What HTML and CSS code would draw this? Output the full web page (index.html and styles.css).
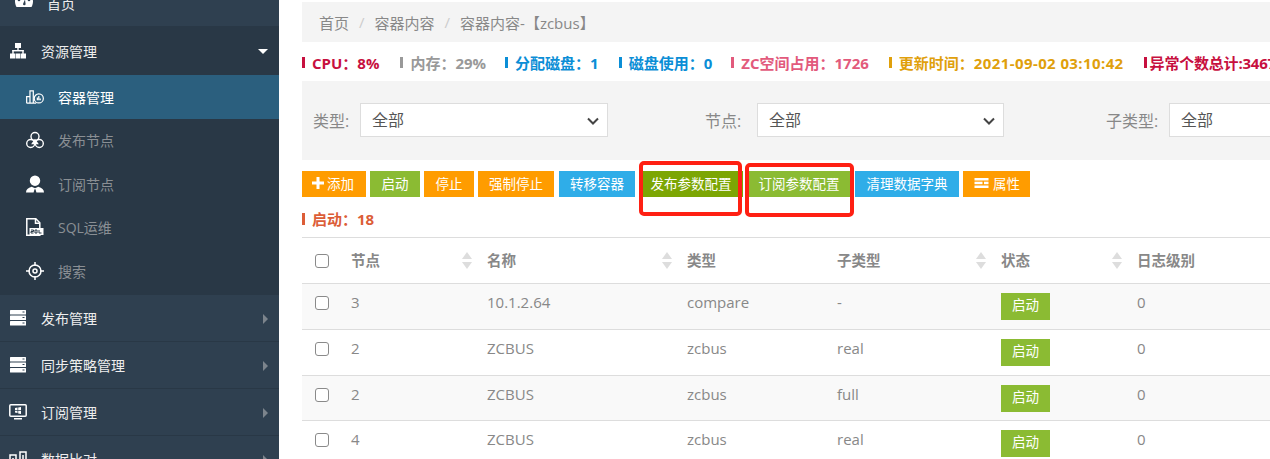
FILE: index.html
```html
<!DOCTYPE html>
<html lang="zh-CN">
<head>
    <meta charset="UTF-8">
    <title>容器内容</title>
    <link rel="stylesheet" href="styles.css">
</head>
<body>
    <aside class="sidebar">
        <ul class="nav">
            <li class="nav-item">
                <svg class="nav-icon gauge" viewBox="0 0 18 14"><path d="M9 0C4 0 0 3.500 0 8.500c0 2 .6 3.800 1.500 5.500h15c.9-1.700 1.500-3.500 1.500-5.500C18 3.500 14 0 9 0z" fill="#fff"/><circle cx="4" cy="7" r="1.300" fill="#2f4050"/><circle cx="14" cy="7" r="1.300" fill="#2f4050"/><circle cx="9" cy="4" r="1.300" fill="#2f4050"/><path d="M8 11l2-4.500.6 4.500a1.300 1.300 0 1 1-2.600 0z" fill="#2f4050"/></svg>
                <span>首页</span>
            </li>
            <li class="nav-item open">
                <svg class="nav-icon" viewBox="0 0 16 16" fill="#fff"><rect x="5" y="0" width="6" height="5"/><rect x="7.300" y="5" width="1.400" height="3"/><rect x="2.300" y="7" width="11.400" height="1.400"/><rect x="2.300" y="7" width="1.400" height="4"/><rect x="12.300" y="7" width="1.400" height="4"/><rect x="0" y="10.500" width="5" height="5"/><rect x="5.500" y="10.500" width="5" height="5"/><rect x="11" y="10.500" width="5" height="5"/></svg>
                <span>资源管理</span>
                <i class="caret-down"></i>
            </li>
            <li class="sub-item active">
                <svg class="sub-icon" viewBox="0 0 19 15" fill="none" stroke="#fff" stroke-width="1.300"><path d="M.7 14V7h3.500v7M4.200 14V1h3.500v13M.7 14h10"/><circle cx="13.500" cy="9" r="4.800" fill="#2b5f7e"/><path d="M12 11V8M13.500 11V6.500M15 11V9"/></svg>
                <span>容器管理</span>
            </li>
            <li class="sub-item">
                <svg class="sub-icon" viewBox="0 0 18 17" fill="none" stroke="#fff" stroke-width="1.400"><circle cx="9" cy="5" r="4"/><circle cx="4.700" cy="12" r="4"/><circle cx="13.300" cy="12" r="4"/><path d="M6.500 12l2.500-3.500 2.500 3.500z" fill="#fff"/></svg>
                <span>发布节点</span>
            </li>
            <li class="sub-item">
                <svg class="sub-icon" viewBox="0 0 19 18" fill="#fff"><circle cx="9.500" cy="5.500" r="5.500"/><path d="M0 18c0-3 2-5 6-6l3.500 1.500 3.500-1.500c4 1 6 3 6 6h-8l-1-3.500h-1l-1 3.500z"/></svg>
                <span>订阅节点</span>
            </li>
            <li class="sub-item">
                <svg class="sub-icon" viewBox="0 0 18 18"><path d="M.8.8h9l4 4v12.400h-13z" fill="none" stroke="#fff" stroke-width="1.500"/><path d="M9.500.8v4.500h4.300" fill="none" stroke="#fff" stroke-width="1.500"/><rect x="3.500" y="10" width="14" height="7" fill="#fff"/><path d="M5 12h2.500v1.500H5V15h2.500M9 12h2v3H9zM13 12v3h2.500" fill="none" stroke="#293846"/></svg>
                <span>SQL运维</span>
            </li>
            <li class="sub-item last">
                <svg class="sub-icon" viewBox="0 0 18 18" fill="none" stroke="#fff" stroke-width="1.500"><circle cx="9" cy="9" r="6"/><circle cx="9" cy="9" r="2"/><path d="M9 0v4M9 14v4M0 9h4M14 9h4"/></svg>
                <span>搜索</span>
            </li>
            <li class="nav-item">
                <svg class="nav-icon" viewBox="0 0 16 16" fill="#fff"><rect width="16" height="4.500" rx=".5"/><rect y="5.500" width="16" height="4.500" rx=".5"/><rect y="11" width="16" height="4.500" rx=".5"/><path d="M12.500 2h2M12.500 7.500h2M12.500 13h2" stroke="#2f4050"/></svg>
                <span>发布管理</span>
                <i class="caret-right"></i>
            </li>
            <li class="nav-item">
                <svg class="nav-icon" viewBox="0 0 16 16" fill="#fff"><rect width="16" height="4.500" rx=".5"/><rect y="5.500" width="16" height="4.500" rx=".5"/><rect y="11" width="16" height="4.500" rx=".5"/><path d="M12.500 2h2M12.500 7.500h2M12.500 13h2" stroke="#2f4050"/></svg>
                <span>同步策略管理</span>
                <i class="caret-right"></i>
            </li>
            <li class="nav-item">
                <svg class="nav-icon wide" viewBox="0 0 18 16"><rect x=".8" y=".8" width="16.400" height="11.400" rx="1" fill="none" stroke="#fff" stroke-width="1.500"/><path d="M6 4l2.500-.4V6H6zM9.200 3.500L12 3v3H9.200zM6 6.700h2.500V9L6 8.600zM9.200 6.700H12V10l-2.800-.5z" fill="#fff"/><rect x="5" y="14" width="8" height="1.500" fill="#fff"/></svg>
                <span>订阅管理</span>
                <i class="caret-right"></i>
            </li>
            <li class="nav-item">
                <svg class="nav-icon wide" viewBox="0 0 18 16" fill="none" stroke="#fff" stroke-width="1.500"><path d="M1 15V4h6v11M1 15h16M11 15V1h6v14M4 7v5M14 4v8"/></svg>
                <span>数据比对</span>
                <i class="caret-right"></i>
            </li>
        </ul>
    </aside>

    <main class="content">
        <div class="breadcrumb">
            <span>首页</span><span class="sep">/</span><span>容器内容</span><span class="sep">/</span><span>容器内容-【zcbus】</span>
        </div>

        <div class="stats">
            <span class="stat crimson"><span>CPU：8%</span></span>
            <span class="stat gray"><span>内存：29%</span></span>
            <span class="stat blue"><span>分配磁盘：1</span></span>
            <span class="stat blue"><span>磁盘使用：0</span></span>
            <span class="stat pink"><span>ZC空间占用：1726</span></span>
            <span class="stat amber"><span>更新时间：<span class="date">2021-09-02 03:10:42</span></span></span>
            <span class="stat crimson tight"><span>异常个数总计:3467</span></span>
        </div>

        <div class="filters">
            <label class="field">
                <span class="field-label">类型:</span>
                <span class="select-wrap">
                    <select><option>全部</option></select>
                    <svg class="chevron" viewBox="0 0 12 8"><path d="M1 1.500l5 5 5-5" fill="none" stroke="#444" stroke-width="2"/></svg>
                </span>
            </label>
            <label class="field wide-gap">
                <span class="field-label">节点:</span>
                <span class="select-wrap">
                    <select><option>全部</option></select>
                    <svg class="chevron" viewBox="0 0 12 8"><path d="M1 1.500l5 5 5-5" fill="none" stroke="#444" stroke-width="2"/></svg>
                </span>
            </label>
            <label class="field long">
                <span class="field-label">子类型:</span>
                <span class="select-wrap">
                    <select><option>全部</option></select>
                    <svg class="chevron" viewBox="0 0 12 8"><path d="M1 1.500l5 5 5-5" fill="none" stroke="#444" stroke-width="2"/></svg>
                </span>
            </label>
        </div>

        <div class="toolbar">
            <button class="btn orange icon-btn">
                <svg class="btn-icon" viewBox="0 0 12 12" fill="#fff"><path d="M4.500 0h3v4.500H12v3H7.500V12h-3V7.500H0v-3h4.500z"/></svg>添加
            </button>
            <button class="btn green short">启动</button>
            <button class="btn orange short">停止</button>
            <button class="btn orange">强制停止</button>
            <button class="btn sky move">转移容器</button>
            <button class="btn olive short">发布参数配置</button>
            <button class="btn green short">订阅参数配置</button>
            <button class="btn sky short">清理数据字典</button>
            <button class="btn orange attr">
                <svg class="btn-icon list" viewBox="0 0 14 10" fill="#fff"><rect width="14" height="2.500"/><rect y="3.700" width="8" height="2.500"/><rect x="9.500" y="3.700" width="4.500" height="2.500"/><rect y="7.500" width="14" height="2.500"/></svg>属性
            </button>
        </div>

        <div class="run-count"><span>启动：18</span></div>

        <table class="grid">
            <colgroup>
                <col class="c-check"><col class="c-node"><col class="c-name"><col class="c-type"><col class="c-sub"><col class="c-state"><col>
            </colgroup>
            <thead>
                <tr>
                    <th><input type="checkbox"></th>
                    <th class="sortable">节点</th>
                    <th class="sortable">名称</th>
                    <th>类型</th>
                    <th class="sortable">子类型</th>
                    <th class="sortable">状态</th>
                    <th>日志级别</th>
                </tr>
            </thead>
            <tbody>
                <tr>
                    <td><input type="checkbox"></td>
                    <td>3</td><td>10.1.2.64</td><td>compare</td><td>-</td>
                    <td><span class="badge">启动</span></td><td>0</td>
                </tr>
                <tr>
                    <td><input type="checkbox"></td>
                    <td>2</td><td>ZCBUS</td><td>zcbus</td><td>real</td>
                    <td><span class="badge">启动</span></td><td>0</td>
                </tr>
                <tr>
                    <td><input type="checkbox"></td>
                    <td>2</td><td>ZCBUS</td><td>zcbus</td><td>full</td>
                    <td><span class="badge">启动</span></td><td>0</td>
                </tr>
                <tr>
                    <td><input type="checkbox"></td>
                    <td>4</td><td>ZCBUS</td><td>zcbus</td><td>real</td>
                    <td><span class="badge">启动</span></td><td>0</td>
                </tr>
            </tbody>
        </table>

        <!-- red marks drawn over the screenshot -->
        <div class="mark mark-publish"></div>
        <div class="mark mark-subscribe"></div>
    </main>
</body>
</html>
```

FILE: styles.css
```css
* {
    box-sizing: border-box;
}
html, body {
    height: 459px;
    overflow: hidden;
}
body {
    margin: 0;
    display: flex;
    background-color: #fff;
    color: #888;
    font-family: "Open Sans", "Noto Sans CJK SC", sans-serif;
    font-size: 14px;
}

/* sidebar */
.sidebar {
    flex: 0 0 279px;
    height: 459px;
    overflow: hidden;
    background-color: #2f4050;
}
.nav {
    list-style: none;
    margin: -20px 0 0;
    padding: 0;
}
.nav-item {
    position: relative;
    display: flex;
    align-items: center;
    height: 47px;
    padding-left: 10px;
    color: #eee;
    border-bottom: 1px solid #293846;
}
.nav-item.open {
    height: 48px;
    background-color: #293846;
}
.sub-item {
    display: flex;
    align-items: center;
    height: 43.5px;
    padding-left: 26px;
    color: #8a8f94;
    background-color: #293846;
}
.sub-item.active {
    color: #fff;
    background-color: #2b5f7e;
}
.sub-item.last {
    height: 46px;
    padding-bottom: 2.5px;
}
.nav-icon {
    flex: none;
    width: 16px;
    height: 16px;
    margin-right: 15px;
}
.nav-icon.wide {
    width: 18px;
    margin-left: -1px;
    margin-right: 14px;
}
.nav-icon.gauge {
    width: 18px;
    height: 14px;
    margin: 0 14px 0 5px;
    transform: translateY(-3px);
}
.sub-icon {
    flex: none;
    width: 18px;
    height: 18px;
    margin-right: 14px;
}
.caret-down {
    position: absolute;
    right: 11px;
    top: 22px;
    border: 5px solid transparent;
    border-top-color: #fff;
    border-bottom: 0;
}
.caret-right {
    position: absolute;
    right: 11px;
    top: 19px;
    border: 5px solid transparent;
    border-left-color: #7c848c;
    border-right: 0;
}

/* main column */
.content {
    position: relative;
    flex: 1;
    min-width: 0;
    padding: 2px 0 0 23px;
}
.breadcrumb {
    display: flex;
    align-items: center;
    height: 40px;
    padding-left: 17px;
    background-color: #f4f4f4;
    font-size: 15px;
}
.sep {
    margin: 0 10px;
    color: #ccc;
}
.stats {
    display: flex;
    align-items: center;
    height: 39px;
    padding-top: 2px;
    white-space: nowrap;
    font-size: 15px;
    font-weight: bold;
}
.stat {
    display: flex;
    align-items: center;
    margin-right: 20px;
}
.stat:nth-child(1) {
    margin-right: 21px;
}
.stat:nth-child(2), .stat:nth-child(4) {
    margin-right: 19px;
}
.stat::before {
    content: "";
    width: 3px;
    height: 11px;
    margin-right: 7px;
    background-color: currentColor;
}
.stat.tight {
    letter-spacing: -.2px;
}
.stat.tight::before {
    margin-right: 3px;
}
.date {
    letter-spacing: .4px;
}
.crimson { color: #c7103f; }
.gray { color: #999; }
.blue { color: #0b8ed6; }
.pink { color: #e25a7c; }
.amber { color: #e0a00b; }

/* filters */
.filters {
    display: flex;
    align-items: center;
    height: 79px;
    padding: 0 0 1px 11px;
    background-color: #f4f4f4;
    white-space: nowrap;
    overflow: hidden;
}
.field {
    display: flex;
    align-items: center;
    margin-right: 97px;
    flex: none;
}
.field.wide-gap {
    margin-right: 102px;
}
.field-label {
    width: 37px;
    margin-right: 10px;
    font-size: 16px;
}
.long .field-label {
    width: 53px;
}
.wide-gap .field-label {
    margin-right: 15px;
}
.select-wrap {
    position: relative;
    width: 248px;
    height: 34px;
}
.wide-gap .select-wrap {
    width: 247px;
}
.select-wrap select {
    appearance: none;
    width: 100%;
    height: 100%;
    padding-left: 11px;
    border: 1px solid #ddd;
    border-radius: 0;
    background-color: #fff;
    color: #555;
    font-family: inherit;
    font-size: 16px;
}
.chevron {
    position: absolute;
    right: 9px;
    top: 14px;
    width: 12px;
    height: 8px;
}

/* toolbar */
.toolbar {
    display: flex;
    gap: 4px;
    margin-top: 11px;
}
.btn {
    display: flex;
    align-items: center;
    height: 26px;
    padding: 0 11px 2px;
    border: 0;
    color: #fff;
    font-family: inherit;
    font-size: 13.5px;
}
.btn.short {
    padding: 0 11.5px 2px;
}
.btn.icon-btn {
    width: 64px;
    padding-left: 10px;
    padding-right: 0;
}
.btn.attr {
    width: 67px;
    padding-right: 0;
}
.btn.move {
    margin-left: 1px;
}
.btn-icon {
    width: 12px;
    height: 12px;
    margin-right: 3px;
}
.btn-icon.list {
    width: 15px;
    height: 10px;
    margin-right: 4px;
}
.orange { background-color: #ff9c00; }
.green { background-color: #8bbb33; }
.sky { background-color: #2fade8; }
.olive { background-color: #7ca604; }

.run-count {
    display: flex;
    align-items: center;
    height: 40px;
    padding-top: 3px;
    color: #dc5d37;
    font-size: 15px;
    font-weight: bold;
}
.run-count::before {
    content: "";
    width: 3px;
    height: 12px;
    margin-right: 7px;
    background-color: currentColor;
}

/* table */
.grid {
    width: 100%;
    table-layout: fixed;
    border-collapse: collapse;
    border-top: 1px solid #ddd;
}
.c-check { width: 37px; }
.c-node { width: 136px; }
.c-name { width: 200px; }
.c-type { width: 150px; }
.c-sub { width: 164px; }
.c-state { width: 136px; }
.grid th, .grid td {
    padding: 8px 12px;
    border-bottom: 1px solid #ddd;
    text-align: left;
    vertical-align: top;
    line-height: 21px;
}
.grid th {
    position: relative;
    height: 46px;
    padding-top: 12px;
    font-size: 14.5px;
}
.grid td {
    height: 46px;
    font-size: 15px;
}
.grid tbody tr:nth-child(3) td {
    height: 45px;
}
.grid tbody tr:nth-child(odd) {
    background-color: #f9f9f9;
}
.grid input {
    appearance: none;
    display: block;
    width: 14px;
    height: 14px;
    margin: 4px 0 0 1px;
    border: 1px solid #8a8a8a;
    border-radius: 3px;
    background-color: #fff;
}
.sortable::before, .sortable::after {
    content: "";
    position: absolute;
    right: 3px;
    border: 5px solid transparent;
}
.sortable::before {
    top: 14px;
    border-top: 0;
    border-bottom: 7px solid #ddd;
}
.sortable::after {
    top: 24px;
    border-bottom: 0;
    border-top: 7px solid #ddd;
}
.badge {
    display: block;
    width: 49px;
    height: 27px;
    margin-top: 1px;
    padding-bottom: 2px;
    background-color: #8bbb33;
    color: #fff;
    font-size: 13.5px;
    line-height: 25px;
    text-align: center;
}

/* annotation boxes */
.mark {
    position: absolute;
    border: 4px solid #ff2013;
    border-radius: 5px;
}
.mark-publish {
    left: 360px;
    top: 161px;
    width: 103px;
    height: 55px;
}
.mark-subscribe {
    left: 466px;
    top: 163px;
    width: 109px;
    height: 54px;
}
```
